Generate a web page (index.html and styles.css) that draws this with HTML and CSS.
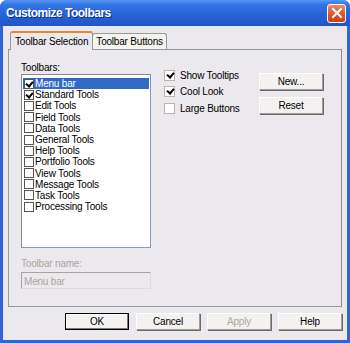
FILE: index.html
```html
<!DOCTYPE html>
<html lang="en">
<head>
    <meta charset="UTF-8">
    <title>Customize Toolbars</title>
    <link rel="stylesheet" href="styles.css">
</head>
<body>
    <div class="window">
        <div class="titlebar">
            <span class="title">Customize Toolbars</span>
            <span class="close">
                <svg width="12" height="12" viewBox="0 0 12 12">
                    <path d="M2 2 L10 10 M10 2 L2 10" stroke="#fff" stroke-width="2" stroke-linecap="square"/>
                </svg>
            </span>
        </div>
        <div class="client">
            <div class="tabs">
                <div class="tab active">Toolbar Selection</div>
                <div class="tab">Toolbar Buttons</div>
            </div>
            <div class="panel">
                <div class="left">
                    <div class="label">Toolbars:</div>
                    <div class="list">
                        <div class="item selected"><span class="box checked"></span>Menu bar</div>
                        <div class="item"><span class="box checked"></span>Standard Tools</div>
                        <div class="item"><span class="box"></span>Edit Tools</div>
                        <div class="item"><span class="box"></span>Field Tools</div>
                        <div class="item"><span class="box"></span>Data Tools</div>
                        <div class="item"><span class="box"></span>General Tools</div>
                        <div class="item"><span class="box"></span>Help Tools</div>
                        <div class="item"><span class="box"></span>Portfolio Tools</div>
                        <div class="item"><span class="box"></span>View Tools</div>
                        <div class="item"><span class="box"></span>Message Tools</div>
                        <div class="item"><span class="box"></span>Task Tools</div>
                        <div class="item"><span class="box"></span>Processing Tools</div>
                    </div>
                    <div class="label disabled name-label">Toolbar name:</div>
                    <div class="textbox">Menu bar</div>
                </div>
                <div class="options">
                    <div class="option"><span class="check checked"></span>Show Tooltips</div>
                    <div class="option"><span class="check checked"></span>Cool Look</div>
                    <div class="option"><span class="check"></span>Large Buttons</div>
                </div>
                <div class="side-buttons">
                    <button class="btn">New...</button>
                    <button class="btn">Reset</button>
                </div>
            </div>
            <div class="footer">
                <button class="btn default">OK</button>
                <button class="btn">Cancel</button>
                <button class="btn" disabled>Apply</button>
                <button class="btn">Help</button>
            </div>
        </div>
    </div>
</body>
</html>
```

FILE: styles.css
```css
body {
    margin: 0;
    background: #fff;
    font-family: 'Liberation Sans', Arial, sans-serif;
    font-size: 10px;
    letter-spacing: -0.2px;
    color: #000;
}
.window {
    width: 350px;
    height: 343px;
    box-sizing: border-box;
    background: #2f63d6;
    border-radius: 7px 7px 0 0;
    display: flex;
    flex-direction: column;
    overflow: hidden;
}
.titlebar {
    height: 26px;
    flex: none;
    display: flex;
    align-items: center;
    justify-content: space-between;
    padding: 0 4px 0 6px;
    background: linear-gradient(to bottom, #5a97f2 0%, #3274e4 18%, #2761d6 60%, #2055c8 100%);
}
.title {
    color: #fff;
    font-weight: bold;
    font-size: 12px;
    letter-spacing: -0.5px;
    text-shadow: 1px 1px 0 #0a2d8a;
}
.close {
    width: 17px;
    height: 17px;
    border: 1px solid #fff;
    border-radius: 3px;
    background: linear-gradient(to bottom, #ee8a62, #d9502a 60%, #c8421e);
    display: flex;
    align-items: center;
    justify-content: center;
}
.client {
    flex: 1;
    margin: 0 3px 3px;
    background: #ebe9ed;
    padding: 6px 5px 0;
    display: flex;
    flex-direction: column;
}
.tabs {
    display: flex;
    align-items: flex-end;
    padding-left: 2px;
    height: 18px;
    position: relative;
    z-index: 1;
}
.tab {
    height: 15px;
    line-height: 15px;
    padding: 0 3px;
    border: 1px solid #919b9c;
    border-bottom: none;
    border-radius: 3px 3px 0 0;
    background: #f4f3ee;
    margin-bottom: 1px;
}
.tab.active {
    height: 17px;
    line-height: 18px;
    background: #ebe9ed;
    margin: 0 -1px 0 0;
    padding: 0 4px;
    border-top: 2px solid #e68b2c;
}
.panel {
    height: 258px;
    box-sizing: border-box;
    margin-top: -1px;
    border: 1px solid #919b9c;
    border-right-color: #8a8a8a;
    background: #ebe9ed;
    padding: 11px 12px 0;
    display: flex;
}
.left {
    width: 130px;
    display: flex;
    flex-direction: column;
}
.label {
    height: 13px;
    line-height: 13px;
}
.disabled {
    color: #a8a69c;
}
.list {
    height: 174px;
    box-sizing: border-box;
    background: #fff;
    border: 1px solid #7f9db9;
    border-top-color: #8b8b8b;
    border-left-color: #8b8b8b;
    padding: 3px 1px 2px;
}
.item {
    height: 11.2px;
    line-height: 11px;
    display: flex;
    align-items: center;
    padding-left: 1px;
    white-space: nowrap;
}
.item.selected {
    background: #316ac5;
    color: #fff;
}
.box {
    width: 8px;
    height: 8px;
    border: 1px solid #555;
    background: #fff;
    margin-right: 1px;
    flex: none;
    position: relative;
}
.box.checked::after,
.check.checked::after {
    content: "";
    position: absolute;
    left: 2px;
    top: 0;
    width: 3px;
    height: 5px;
    border: solid #000;
    border-width: 0 2px 2px 0;
    transform: rotate(40deg);
}
.name-label {
    margin-top: 9px;
}
.textbox {
    margin-top: 2px;
    height: 17px;
    box-sizing: border-box;
    border: 1px solid #a5a5a5;
    border-bottom-color: #dcdcdc;
    border-right-color: #dcdcdc;
    padding: 3px 2px;
    color: #a8a69c;
    line-height: 11px;
}
.options {
    margin-left: 13px;
    padding-top: 6px;
    width: 95px;
}
.option {
    height: 16.5px;
    display: flex;
    align-items: center;
    white-space: nowrap;
}
.check {
    width: 9px;
    height: 9px;
    border: 1px solid #b7b5ae;
    background: #fff;
    margin-right: 5px;
    position: relative;
    flex: none;
}
.check.checked::after {
    left: 3px;
    top: 0;
}
.side-buttons {
    padding-top: 12px;
    display: flex;
    flex-direction: column;
    gap: 7px;
}
.btn {
    width: 64px;
    height: 17px;
    padding: 0;
    font-family: inherit;
    font-size: 10px;
    letter-spacing: -0.2px;
    color: #000;
    background: #f3f2f0;
    border: 1px solid #a09c94;
    border-top-color: #fff;
    border-left-color: #fff;
    box-shadow: 1px 1px 0 #6b6b6b;
}
.btn:disabled {
    color: #aca899;
}
.btn.default {
    border: 1px solid #000;
    box-shadow: inset -1px -1px 0 #7a7a7a, inset 1px 1px 0 #fff;
}
.footer {
    display: flex;
    justify-content: flex-end;
    gap: 7px;
    margin-top: 6px;
}
```
